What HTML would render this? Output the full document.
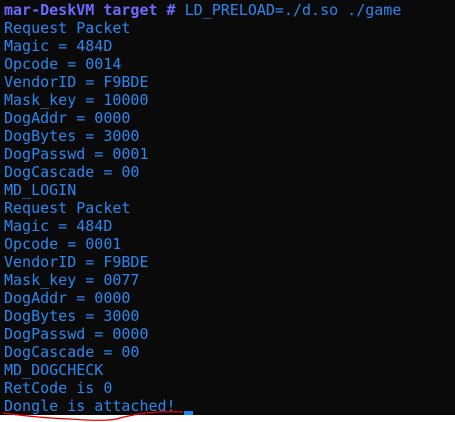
<html><head><style>
body{margin:0;width:455px;height:422px;background:#fff;overflow:hidden;position:relative}
#t{position:absolute;left:0;top:0;width:455px;height:415px;background:#0a0a0a}
pre{margin:0;position:absolute;left:4px;top:1px;font:15px/18px "DejaVu Sans Mono",monospace;color:#2a86ee}
b{color:#6b6bff}
</style></head><body><div id="t"></div>
<pre><b>mar-DeskVM target #</b> LD_PRELOAD=./d.so ./game
Request Packet
Magic = 484D
Opcode = 0014
VendorID = F9BDE
Mask_key = 10000
DogAddr = 0000
DogBytes = 3000
DogPasswd = 0001
DogCascade = 00
MD_LOGIN
Request Packet
Magic = 484D
Opcode = 0001
VendorID = F9BDE
Mask_key = 0077
DogAddr = 0000
DogBytes = 3000
DogPasswd = 0000
DogCascade = 00
MD_DOGCHECK
RetCode is 0
Dongle is attached!</pre>
<div style="position:absolute;left:184px;top:411px;width:9px;height:4px;background:#1e88f0"></div>
<svg style="position:absolute;left:0;top:0" width="455" height="422"><path d="M3 413 Q40 418 70 419 Q110 422 120 418 Q150 410 183 412" stroke="#e00" stroke-width="1.3" fill="none"/></svg>
</body></html>
